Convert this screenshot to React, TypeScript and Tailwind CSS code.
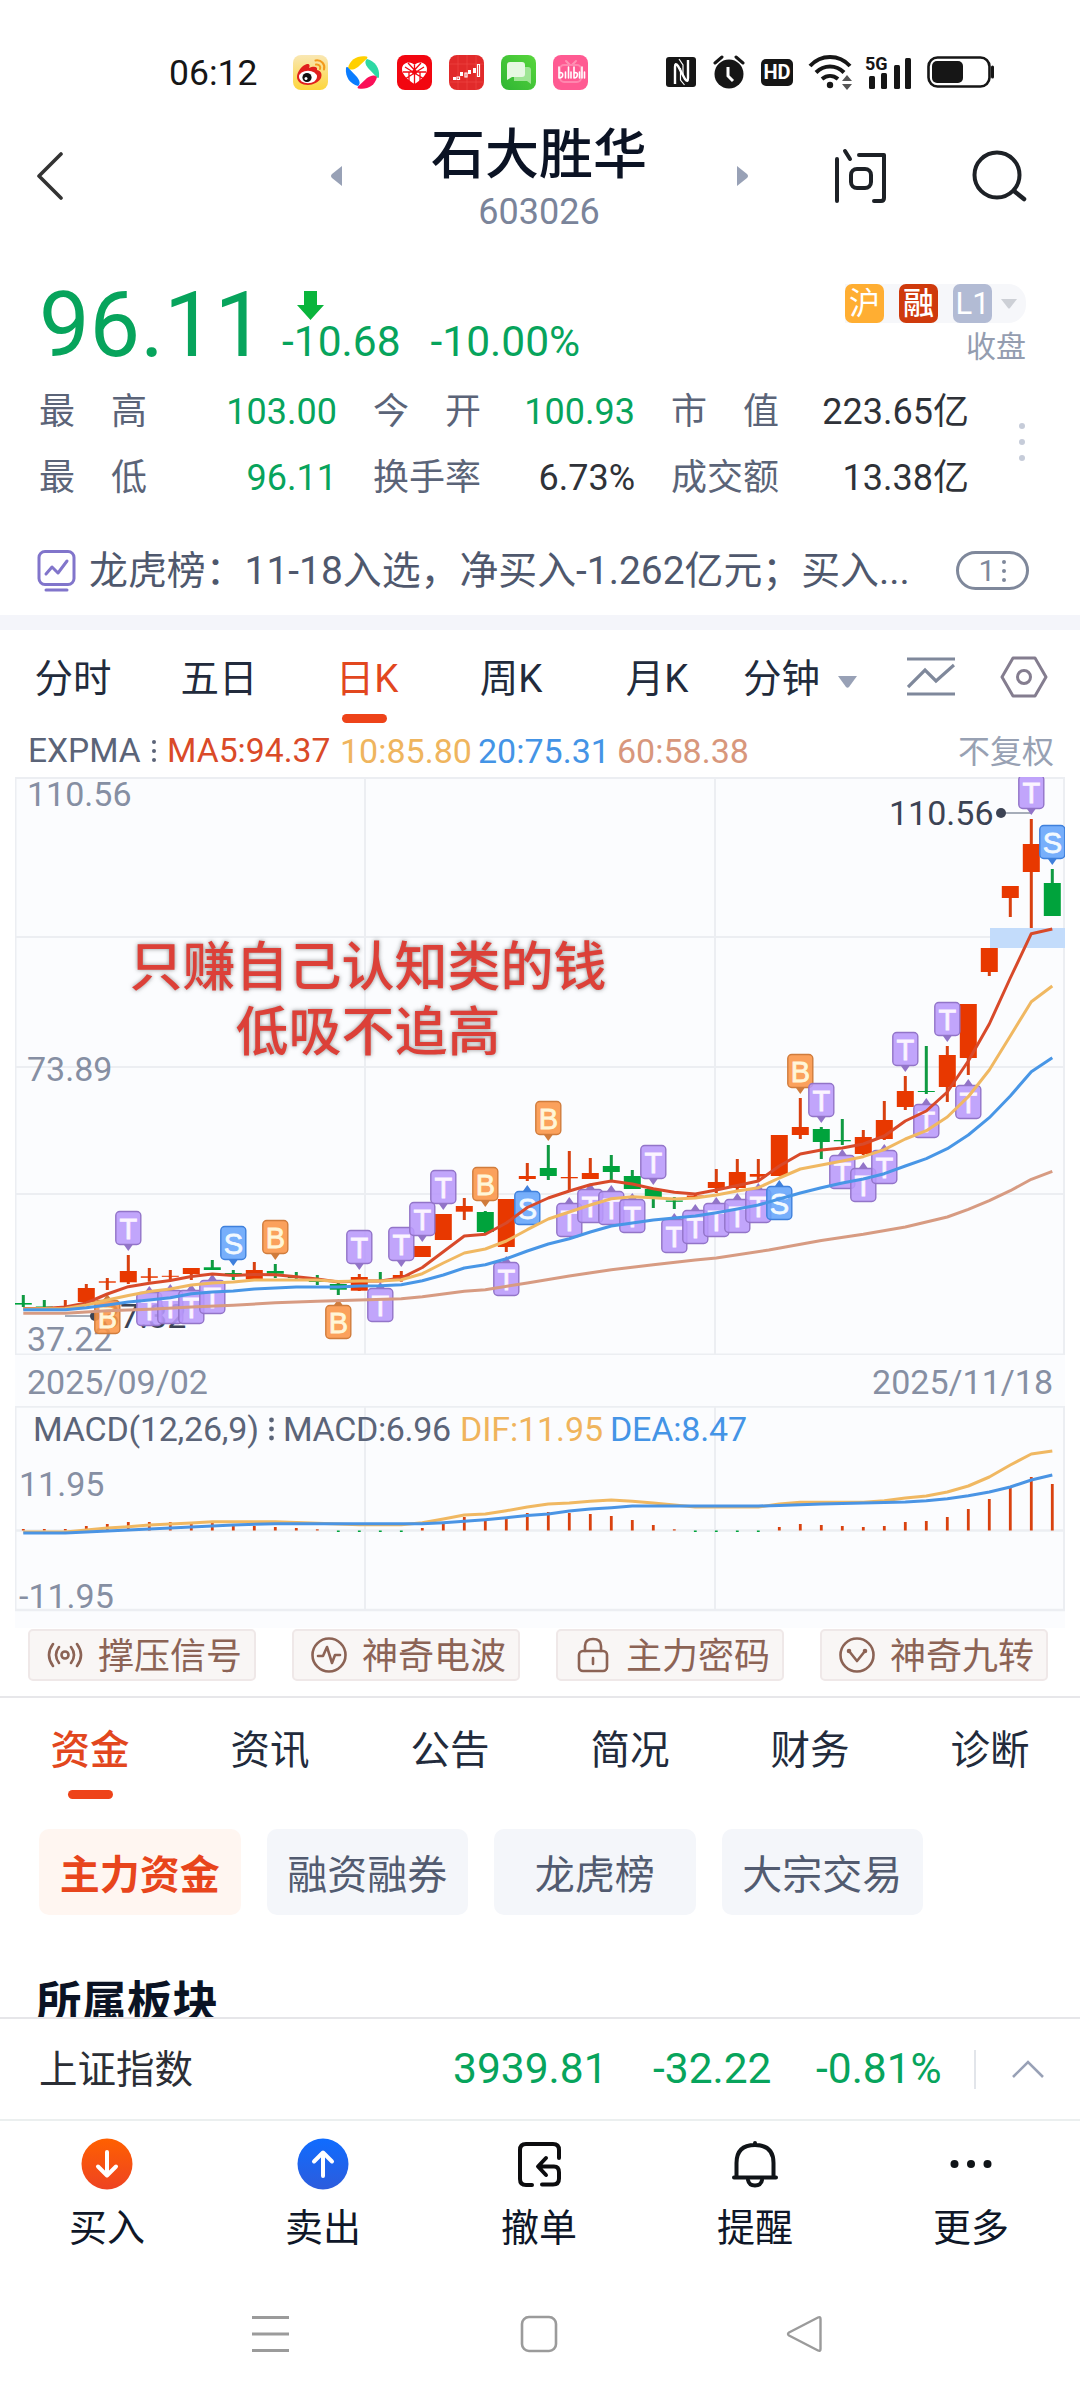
import React from 'react';

const UP = '#e83800';
const DOWN = '#00a33c';

type Candle = [high: number, top: number, bottom: number, low: number, color: string];

const candles: Candle[] = [
  [1295, 1303, 1304.6, 1307, DOWN],
  [1300, 1306.5, 1308, 1308, DOWN],
  [1300, 1306.5, 1308, 1308, UP],
  [1284, 1288, 1302, 1302, UP],
  [1278, 1281.3, 1282.7, 1290, UP],
  [1255, 1271, 1282.3, 1284, UP],
  [1268, 1276.3, 1277.8, 1281.7, UP],
  [1270, 1275.8, 1276.8, 1281, UP],
  [1268, 1268, 1274, 1280, UP],
  [1260, 1267.3, 1270, 1270, DOWN],
  [1270, 1273, 1274.7, 1280, DOWN],
  [1262, 1270, 1279.3, 1281, UP],
  [1264, 1271, 1273.7, 1278, DOWN],
  [1272, 1277, 1278, 1280, DOWN],
  [1275, 1280.7, 1282, 1285, DOWN],
  [1283, 1284, 1289.7, 1295, DOWN],
  [1274, 1277, 1290.7, 1291, UP],
  [1272, 1280, 1281, 1282, DOWN],
  [1271, 1275, 1279, 1281.7, UP],
  [1246, 1246, 1257, 1257, UP],
  [1214, 1214, 1240, 1240, UP],
  [1198, 1206, 1211.7, 1220, UP],
  [1211, 1212, 1232, 1233, DOWN],
  [1199, 1199, 1247, 1252, UP],
  [1163, 1176, 1179, 1181, UP],
  [1145, 1168, 1176, 1180, DOWN],
  [1151, 1177, 1178.3, 1190, UP],
  [1158, 1173, 1179, 1179, UP],
  [1155, 1166, 1172, 1181, DOWN],
  [1170, 1176, 1189, 1189, DOWN],
  [1189, 1189, 1197, 1208, DOWN],
  [1197, 1200.5, 1201.8, 1209, DOWN],
  [1194, 1195.5, 1197, 1199, UP],
  [1169, 1182, 1188, 1193, UP],
  [1159, 1172, 1188, 1190, UP],
  [1159, 1174, 1176.7, 1180, UP],
  [1135, 1135, 1176, 1176, UP],
  [1098, 1127, 1135, 1139, UP],
  [1127, 1129, 1142, 1159, DOWN],
  [1119, 1140, 1141.3, 1145, DOWN],
  [1130, 1137, 1154, 1155, UP],
  [1101, 1120, 1139, 1140, UP],
  [1076, 1091, 1107, 1110, UP],
  [1046, 1091, 1092, 1094, DOWN],
  [1046, 1055, 1087, 1102, UP],
  [1004, 1004, 1058, 1075, UP],
  [948, 948, 972, 976, UP],
  [886, 886, 898, 917, UP],
  [819, 844, 872, 928, UP],
  [869, 883, 916, 916, DOWN],
];

type Point = [index: number, y: number];

const ma5: Point[] = [
  [0, 1308.5], [1, 1308.5], [2, 1307], [3, 1303], [4, 1294], [5, 1286.7], [6, 1283.3], [7, 1280.5], [8, 1276.5], [9, 1274],
  [10, 1275.5], [11, 1274.5], [12, 1274.7], [13, 1276.7], [14, 1279], [15, 1282], [16, 1281], [17, 1281], [18, 1278], [19, 1267.5],
  [20, 1251.7], [21, 1236], [22, 1234.3], [23, 1223], [24, 1207.5], [25, 1198], [26, 1191], [27, 1184.7], [28, 1181], [29, 1184],
  [30, 1188.7], [31, 1192.3], [32, 1194], [33, 1190], [34, 1185.5], [35, 1181], [36, 1166], [37, 1154], [38, 1150], [39, 1148],
  [40, 1144], [41, 1136], [42, 1121], [43, 1111], [44, 1092], [45, 1061], [46, 1024], [47, 978], [48, 933.7], [49, 929],
];

const ma10: Point[] = [
  [0, 1309], [2, 1308.5], [3, 1305], [4, 1300], [5, 1295.5], [6, 1291.5], [7, 1289], [8, 1285], [9, 1283], [10, 1282],
  [11, 1280], [14, 1280], [15, 1281.5], [16, 1281], [17, 1281], [18, 1279.7], [19, 1273.7], [20, 1263], [21, 1253], [22, 1249],
  [23, 1241], [24, 1229.7], [25, 1219], [26, 1212], [27, 1205], [28, 1198.7], [29, 1196.7], [30, 1197.7], [31, 1199], [32, 1198],
  [33, 1195], [34, 1191], [35, 1187.7], [36, 1178], [37, 1169], [38, 1165], [39, 1161], [40, 1156.7], [41, 1149.7], [42, 1139],
  [43, 1130.7], [44, 1117], [45, 1096.7], [46, 1070], [47, 1036], [48, 1001.7], [49, 986],
];

const ma20: Point[] = [
  [0, 1309.7], [2, 1309.7], [3, 1307.7], [4, 1305], [5, 1302], [6, 1300], [7, 1297.7], [8, 1293.7], [9, 1292], [10, 1291],
  [11, 1289], [12, 1288], [13, 1287], [15, 1287], [16, 1286], [17, 1285.7], [18, 1284.7], [19, 1280.7], [20, 1275], [21, 1268],
  [22, 1264.7], [23, 1258.7], [24, 1251], [25, 1244], [26, 1238.7], [27, 1232], [28, 1226], [29, 1223], [30, 1220], [31, 1218],
  [32, 1216], [33, 1212.7], [34, 1209], [35, 1205], [36, 1199], [37, 1193], [38, 1187.7], [39, 1183], [40, 1179], [41, 1173.7],
  [42, 1166], [43, 1158.7], [44, 1148.7], [45, 1135], [46, 1117.7], [47, 1096], [48, 1071.7], [49, 1057.7],
];

const ma60: Point[] = [
  [0, 1313.3], [2, 1313.3], [4, 1310.7], [6, 1309.3], [8, 1307], [10, 1305.3], [12, 1302.7], [14, 1301.3], [16, 1300], [18, 1298.7],
  [19, 1296.7], [21, 1291.3], [22, 1289.7], [24, 1283], [26, 1276], [28, 1269.7], [30, 1264.7], [32, 1260], [33, 1258], [35.5, 1250],
  [38, 1240.5], [40, 1234.3], [42, 1227], [44, 1217], [45, 1209.3], [46, 1200.7], [47, 1190.7], [48, 1179.3], [49, 1171.3],
];

const macd = [
  1529, 1529, 1529, 1526, 1524, 1522, 1522, 1522, 1522, 1523, 1524, 1526, 1527, 1528, 1529.3, 1532, 1532, 1532, 1532, 1528,
  1524, 1517, 1521, 1519, 1513, 1512, 1513, 1514, 1516, 1520, 1525, 1529.3, 1532, 1532, 1532, 1532, 1527, 1524, 1525, 1526,
  1527, 1526, 1522, 1521, 1517, 1509, 1499, 1487, 1477, 1484,
];

const dif: Point[] = [
  [0, 1532], [2, 1532], [3, 1530], [4, 1528], [5, 1526.7], [6, 1525], [8, 1523], [9, 1521.7], [12, 1521.7], [14, 1523.3],
  [16, 1524.7], [18, 1524.7], [19, 1522.7], [20, 1519], [21, 1515], [22, 1514], [23, 1510.7], [24, 1507], [25, 1504], [26, 1503],
  [27, 1501.3], [28, 1500], [29, 1501.3], [30, 1503], [31, 1505], [32, 1507], [35, 1507], [36, 1504], [37, 1502.3], [40, 1502.3],
  [41, 1500.7], [42, 1498], [43, 1496], [44, 1492], [45, 1486], [46, 1477], [47, 1465], [48, 1454], [49, 1451],
];

const dea: Point[] = [
  [0, 1533], [2, 1533], [4, 1531], [6, 1529], [8, 1527], [10, 1525], [12, 1523.7], [19, 1523.7], [20, 1522.7], [21, 1521.3],
  [22, 1519.7], [23, 1517.7], [24, 1515.5], [25, 1514], [26, 1511], [27, 1509], [28, 1507.7], [29, 1506], [35, 1506], [36, 1505.5],
  [38, 1504], [40, 1503], [42, 1502], [43, 1500.7], [44, 1498.7], [45, 1495.7], [46, 1492], [47, 1487], [48, 1480], [49, 1475],
];

type Mark = [index: number, edge: number, letter: 'T' | 'B' | 'S'];

// edge = top of the box for marks above a candle, bottom of the box for marks below it
const marksAbove: Mark[] = [
  [5, 1211, 'T'], [10, 1226, 'S'], [12, 1220, 'B'], [16, 1230, 'T'], [18, 1227, 'T'], [19, 1202, 'T'], [20, 1170, 'T'],
  [22, 1167, 'B'], [25, 1101, 'B'], [30, 1145, 'T'], [37, 1054, 'B'], [38, 1083, 'T'], [42, 1032, 'T'], [44, 1002, 'T'],
  [48, 775, 'T'], [49, 825, 'S'],
];

const marksBelow: Mark[] = [
  [4, 1334, 'B'], [6, 1326, 'T'], [7, 1324, 'T'], [8, 1324, 'T'], [9, 1314, 'T'], [15, 1339, 'B'], [17, 1322, 'T'], [23, 1296, 'T'],
  [24, 1225, 'S'], [26, 1237, 'T'], [27, 1223, 'T'], [28, 1225, 'T'], [29, 1233, 'T'], [31, 1253, 'T'], [32, 1244, 'T'],
  [33, 1237, 'T'], [34, 1233, 'T'], [35, 1223, 'T'], [36, 1220, 'S'], [39, 1189, 'T'], [40, 1202, 'T'], [41, 1184, 'T'],
  [43, 1138, 'T'], [45, 1119, 'T'],
];

const markFill = { T: '#b898fa', B: '#fa9446', S: '#64a4fa' };
const markStroke = { T: '#9274c8', B: '#d07c3c', S: '#3f80dc' };
const markText = { T: '#fbf4ff', B: '#fff6d8', S: '#f2f9ff' };

const px = (i: number) => 23.3 + i * 21;
const toPoints = (pts: Point[]) => pts.map(([i, y]) => `${px(i)},${y}`).join(' ');

const Marker: React.FC<{ mark: Mark; below?: boolean }> = ({ mark: [i, edge, letter], below }) => {
  const x = px(i);
  const top = below ? edge - 34 : edge;
  const tip = below
    ? `M${x - 5} ${top + 1} L${x} ${top - 6} L${x + 5} ${top + 1} Z`
    : `M${x - 5} ${top + 33} L${x} ${top + 40} L${x + 5} ${top + 33} Z`;
  return (
    <g>
      <path d={tip} fill={markStroke[letter]} />
      <rect x={x - 12.5} y={top + 0.5} width="25" height="33" rx="4" fill={markFill[letter]} fillOpacity="0.88" stroke={markStroke[letter]} strokeWidth="1.4" />
      <text
        x={x}
        y={top + 27.5}
        textAnchor="middle"
        fontSize="29"
        fill={markText[letter]}
        stroke={markText[letter]}
        strokeWidth="0.8"
        fontFamily="Liberation Sans, Arial, sans-serif"
      >
        {letter}
      </text>
    </g>
  );
};

const CandleChart = () => (
  <svg className="block" width="1050" height="578" viewBox="15 777 1050 578">
    <g stroke="#eceef2" strokeWidth="2">
      <path d="M15 778H1065M15 937H1065M15 1067H1065M15 1194H1065M15 1354.500H1065" />
      <path d="M365 777V1355M715 777V1355M1064 777V1355M15.500 777V1355" />
    </g>
    <g fontSize="34" fill="#868fa3">
      <text x="27" y="806">110.56</text>
      <text x="27" y="1081">73.89</text>
      <text x="27" y="1350.5">37.22</text>
    </g>
    <rect x="990" y="928" width="75" height="20" fill="#c3dcfb" />

    <path d="M65 1316H93M1001 813H1031" stroke="#8b93a3" strokeWidth="1.6" />
    <g fill="#3c4354" fontSize="34">
      <circle cx="95" cy="1316" r="5" />
      <circle cx="1001" cy="813" r="5" />
      <text x="101" y="1328">37.32</text>
      <text x="889" y="825">110.56</text>
    </g>

    {candles.map(([high, top, bottom, low, color], i) => (
      <g key={i} fill={color}>
        <rect x={px(i) - 1.5} y={high} width="3" height={low - high} fill={color === UP ? '#d84010' : '#109a42'} />
        <rect x={px(i) - 8.5} y={top} width="17" height={bottom - top} />
      </g>
    ))}

    {marksBelow.map((m) => <Marker key={m[0]} mark={m} below />)}
    {marksAbove.map((m) => <Marker key={m[0]} mark={m} />)}

    <g fill="none" strokeWidth="3" strokeLinejoin="round">
      <polyline points={toPoints(ma60)} stroke="#d79b82" />
      <polyline points={toPoints(ma5)} stroke="#d84a2a" />
      <polyline points={toPoints(ma10)} stroke="#f0b862" />
      <polyline points={toPoints(ma20)} stroke="#4896e6" />
    </g>
  </svg>
);

const MacdChart = () => (
  <svg className="block" width="1050" height="222" viewBox="15 1406 1050 222">
    <g stroke="#eceef2" strokeWidth="2">
      <path d="M15 1406.500H1065M15 1530.500H1065M15 1610H1065" strokeWidth="2.500" />
      <path d="M365 1406V1610M715 1406V1610M1064 1406V1610M15.500 1406V1610" />
    </g>
    {macd.map((y, i) => (
      <rect
        key={i}
        x={px(i) - 1.4}
        y={Math.min(y, 1530.5)}
        width="2.8"
        height={Math.max(1.2, Math.abs(1530.5 - y))}
        fill={y > 1530.5 ? DOWN : '#d9420f'}
      />
    ))}
    <g fill="none" strokeWidth="3" strokeLinejoin="round">
      <polyline points={toPoints(dif)} stroke="#f0b862" />
      <polyline points={toPoints(dea)} stroke="#4a94e4" />
    </g>
    <g fontSize="34" fill="#868fa3">
      <text x="19" y="1495.5">11.95</text>
      <text x="19" y="1607.5">-11.95</text>
    </g>
    <g fontSize="34">
      <text x="33" y="1440.5" fill="#5b6478" textLength="226">MACD(12,26,9)</text>
      <text x="283" y="1440.5" fill="#5b6478" textLength="168">MACD:6.96</text>
      <text x="460" y="1440.5" fill="#f0b45c" textLength="143">DIF:11.95</text>
      <text x="610" y="1440.5" fill="#4494e6" textLength="137">DEA:8.47</text>
    </g>
    <g fill="#5b6478">
      <circle cx="271.5" cy="1420" r="2.4" />
      <circle cx="271.5" cy="1429" r="2.4" />
      <circle cx="271.5" cy="1438" r="2.4" />
    </g>
  </svg>
);

const StatusBar = () => (
  <div className="flex h-[110px] items-center pt-[34px] pl-[169px] text-[#161616]">
    <span className="w-[124px] pt-[3px] text-[35.500px] leading-none">06:12</span>
    <div className="flex gap-[17px]">
      {/* weibo */}
      <svg width="35" height="35" viewBox="0 0 35 35">
        <defs>
          <linearGradient id="weibo" x1="0" y1="0" x2="0" y2="1">
            <stop offset="0" stopColor="#f9e7b4" />
            <stop offset="1" stopColor="#fdd63c" />
          </linearGradient>
        </defs>
        <rect width="35" height="35" rx="8" fill="url(#weibo)" />
        <path d="M4 22C4 17 9 10 14 9c3-.5 3 2 2 4 4-2 9-2 8 2 5 1 5 5 4 8-2 4-8 7-13 7-6 0-11-3-11-8Z" fill="#e01f1c" />
        <ellipse cx="15" cy="22" rx="9" ry="6.2" fill="#fff" />
        <circle cx="14" cy="22.5" r="4.6" fill="#111" />
        <circle cx="13" cy="23.5" r="1.5" fill="#fff" />
        <path d="M22.500 5.500c6-1 10 4 8.500 9M23 9.500c3-.5 5 2 4 4.500" fill="none" stroke="#f39a1c" strokeWidth="2" strokeLinecap="round" />
      </svg>
      {/* pinwheel */}
      <svg width="35" height="35" viewBox="0 0 35 35">
        <path d="M3 13C5 4 13 0 21.500 1.500c1 .2 1.200 1 .5 2L13 12C9 15 5 15.500 3 13Z" fill="#ffd000" />
        <path d="M22 4c8 2 13 9 12 18-.2 1-1 1.200-2 .5L23 13c-3-4-3.500-7-1-9Z" fill="#2ed8a4" />
        <path d="M32 22c-2 9-10 13-18.500 11.500-1-.2-1.200-1-.5-2L22 23c4-3 8-3.500 10-1Z" fill="#fa1058" />
        <path d="M13 31C5 29 0 22 1 13c.2-1 1-1.200 2-.5L12 22c3 4 3.500 7 1 9Z" fill="#0a7cff" />
      </svg>
      {/* pinduoduo */}
      <svg width="35" height="35" viewBox="0 0 35 35">
        <rect width="35" height="35" rx="8" fill="#f20610" />
        <path d="M17.500 10C14 5.500 5 7 5 14c0 6 6 11 12.500 15C24 25 30 20 30 14c0-7-9-8.500-12.500-4Z" fill="#fff" />
        <path d="M17.500 10v19M8 12l19 12M27 12L8 24M11 8l6.500 7L24 8M6 17h23M12 26v-9M23 26v-9" stroke="#f20610" strokeWidth="1.3" fill="none" />
        <circle cx="17.500" cy="17" r="2.500" fill="#f20610" />
      </svg>
      {/* broker app */}
      <svg width="35" height="35" viewBox="0 0 35 35">
        <rect width="35" height="35" rx="8" fill="#e12a2a" />
        <path d="M9 0v35M18 0v35M27 0v35M0 9h35M0 27h35" stroke="#f04a48" strokeWidth=".6" />
        <path d="M4 22h3v3H4zM11 17h3v4h-3zM19 15h3v4h-3zM24 13h3v5h-3z" fill="#fff" />
        <path d="M8 22h2.500v2.500H8zM16 18h2v4h-2zM28.500 9.500h2v12h-2z" fill="none" stroke="#fff" strokeWidth="1.200" />
      </svg>
      {/* messages */}
      <svg width="35" height="35" viewBox="0 0 35 35">
        <defs>
          <linearGradient id="msg" x1="1" y1="0" x2="0" y2="1">
            <stop offset="0" stopColor="#58d63c" />
            <stop offset="1" stopColor="#2fb534" />
          </linearGradient>
        </defs>
        <rect width="35" height="35" rx="8" fill="url(#msg)" />
        <path d="M13 12h14c2 0 3 1 3 3v14l-4-3H13Z" fill="#9ee594" />
        <path d="M9 7h12c2 0 3 1 3 3v9c0 2-1 3-3 3H11l-5 3V10c0-2 1-3 3-3Z" fill="#e6f8e2" />
      </svg>
      {/* video app */}
      <svg width="35" height="35" viewBox="0 0 35 35">
        <rect width="35" height="35" rx="8" fill="#ff5a92" />
        <path d="M13 6l4 4M23 6l-4 4" stroke="#ff92b4" strokeWidth="2" strokeLinecap="round" />
        <rect x="7" y="10" width="21" height="17" rx="4" fill="none" stroke="#ff86ae" strokeWidth="2" />
        <path d="M6 12v11M6 18c5-2 5 5 0 5M12.500 17v6M15.500 12v11M18 17v6M21 12v11M21 18c5-2 4 5 0 5M26.500 17v6M29 12v11M31.500 17v6" stroke="#fff" strokeWidth="1.600" fill="none" strokeLinecap="round" />
      </svg>
    </div>
    <div className="ml-[78px] flex items-center">
      <svg width="30" height="30" viewBox="0 0 30 30">
        <rect width="30" height="30" rx="3" fill="#161616" />
        <path d="M9 27V10q0-5 3-1l7 13q3 4 3-1V3" fill="none" stroke="#fff" strokeWidth="2.400" />
        <path d="M14.500 11v12l4 5M17 19V8l-4-6" fill="none" stroke="#fff" strokeWidth="1.200" />
      </svg>
      <svg className="ml-[17px]" width="32" height="34" viewBox="0 0 32 34">
        <circle cx="16" cy="19" r="14.500" fill="#161616" />
        <path d="M2 8l7-6M30 8l-7-6" stroke="#161616" strokeWidth="3" strokeLinecap="round" />
        <path d="M15 12v9l5 5" fill="none" stroke="#fff" strokeWidth="3" />
      </svg>
      <span className="ml-[16px] flex h-[27px] w-[32px] items-center justify-center rounded-[5px] bg-[#161616] text-[20px] font-bold leading-none text-white">HD</span>
      <svg className="ml-[15px]" width="44" height="36" viewBox="0 0 44 36">
        <g fill="none" stroke="#161616" strokeWidth="4">
          <path d="M2 12c11-12 29-12 40 0" />
          <path d="M8 18.500c8-8 20-8 28 0" />
          <path d="M14 25c5-4 11-4 16 0" />
        </g>
        <circle cx="22" cy="31" r="3.200" fill="#161616" />
        <path d="M34 27l5-6 5 6ZM34 30h10l-5 6Z" fill="#555" />
      </svg>
      <svg className="ml-[13px]" width="48" height="42" viewBox="0 -6 48 42">
        <text x="0" y="13" fontSize="18" fontWeight="700" fill="#161616">5G</text>
        <g fill="#161616">
          <rect x="4" y="19" width="6" height="13" rx="1.500" />
          <rect x="16" y="16" width="6" height="16" rx="1.500" />
          <rect x="29" y="8" width="6" height="24" rx="1.500" />
          <rect x="40" y="1" width="6" height="31" rx="1.500" />
        </g>
      </svg>
      <svg className="ml-[14px]" width="68" height="32" viewBox="0 0 68 32">
        <rect x="1.500" y="1.500" width="61" height="29" rx="9" fill="none" stroke="#161616" strokeWidth="2.600" />
        <rect x="5" y="5" width="31" height="22" rx="5" fill="#161616" />
        <path d="M65.500 11v10" stroke="#161616" strokeWidth="3" strokeLinecap="round" />
      </svg>
    </div>
  </div>
);

const Header = () => (
  <div className="flex h-[132px] items-center pl-[36px]">
    <svg width="28" height="48" viewBox="0 0 28 48">
      <path d="M25 2L3 24l22 22" fill="none" stroke="#333" strokeWidth="3.600" strokeLinecap="round" strokeLinejoin="round" />
    </svg>
    <svg className="ml-[267px]" width="12" height="20" viewBox="0 0 12 20">
      <path d="M11 0v20L1 12q-2-2 0-4Z" fill="#98a1b6" />
    </svg>
    <div className="ml-[76px] flex w-[240px] flex-col items-center pt-[5px]">
      <h1 className="text-[54px] font-medium leading-[60px] text-[#0b1324]">石大胜华</h1>
      <span className="mt-[6px] text-[36px] leading-[40px] text-[#7a849a]">603026</span>
    </div>
    <svg className="ml-[77px]" width="12" height="20" viewBox="0 0 12 20">
      <path d="M1 0v20l10-8q2-2 0-4Z" fill="#98a1b6" />
    </svg>
    <svg className="ml-[86px]" width="54" height="56" viewBox="0 0 54 56">
      <g fill="none" stroke="#1d2126" strokeWidth="4" strokeLinecap="round" strokeLinejoin="round">
        <path d="M3 11v42M11 3l5 8M25 7h25v43q0 3-3 3h-7" />
        <rect x="17" y="21" width="20" height="19" rx="6" />
      </g>
    </svg>
    <svg className="ml-[84px]" width="56" height="52" viewBox="0 0 56 52">
      <circle cx="25" cy="25" r="22.500" fill="none" stroke="#1d2126" strokeWidth="4" />
      <path d="M42 41l10 8" stroke="#1d2126" strokeWidth="4.500" strokeLinecap="round" />
    </svg>
  </div>
);

const stats = [
  [
    { label: '最高', value: '103.00', green: true },
    { label: '今开', value: '100.93', green: true },
    { label: '市值', value: '223.65亿' },
  ],
  [
    { label: '最低', value: '96.11', green: true },
    { label: '换手率', value: '6.73%' },
    { label: '成交额', value: '13.38亿' },
  ],
];

const Quote = () => (
  <div className="pt-[37px]">
    <div className="flex h-[90px] pl-[39px] pr-[54px] text-[#07a45c]">
      <span className="pt-[2px] text-[90px] leading-[90px]">96.11</span>
      <div className="ml-[17px] pt-[11px]">
        <svg className="ml-[15px] block" width="27" height="30" viewBox="0 0 27 30">
          <path d="M7 1h13v14h7L13.500 30 0 15h7Z" fill="#0ab53c" />
        </svg>
        <div className="flex gap-[30px] pt-[1px] text-[42.500px] leading-[42px]">
          <span>-10.68</span>
          <span>-10.00%</span>
        </div>
      </div>
      <div className="ml-auto flex flex-col items-end pt-[5px]">
        <div className="flex h-[39px] items-center gap-[15px] rounded-r-[18px] bg-[#f6f7fa] text-[31px] leading-none text-white">
          <span className="flex h-[39px] w-[39px] items-center justify-center rounded-[7px] bg-[#ffae32]">沪</span>
          <span className="flex h-[39px] w-[39px] items-center justify-center rounded-[7px] bg-[#cf3a0c] font-medium">融</span>
          <div className="flex items-center">
            <span className="flex h-[39px] w-[39px] items-center justify-center rounded-[7px] bg-[#b2bbd4] text-[31px]">L1</span>
            <svg className="mx-[9px]" width="16" height="10" viewBox="0 0 16 10">
              <path d="M0 0h16L9 9q-1 1-2 0Z" fill="#cdd0d6" />
            </svg>
          </div>
        </div>
        <span className="mt-[8px] text-[30px] leading-[32px] text-[#949db0]">收盘</span>
      </div>
    </div>

    <div className="mt-[10px] flex h-[131px] items-center pl-[39px]">
      <div>
        {stats.map((row, r) => (
          <div key={r} className="flex h-[66px] items-center gap-[36px] text-[36px] leading-none">
            {row.map((s, c) => (
              <div key={s.label} className={c === 1 ? 'flex w-[262px] justify-between' : 'flex w-[298px] justify-between'}>
                <span className="flex w-[108px] justify-between text-[#5b6478]">
                  {s.label.split('').map((ch) => <span key={ch}>{ch}</span>)}
                </span>
                <span className={s.green ? 'text-[#07a45c]' : 'text-[#2f3238]'}>{s.value}</span>
              </div>
            ))}
          </div>
        ))}
      </div>
      <div className="mb-[5px] ml-[50px] flex flex-col gap-[10px]">
        <i className="h-[6px] w-[6px] rounded-full bg-[#c6ccd9]" />
        <i className="h-[6px] w-[6px] rounded-full bg-[#c6ccd9]" />
        <i className="h-[6px] w-[6px] rounded-full bg-[#c6ccd9]" />
      </div>
    </div>

    <div className="flex h-[105px] items-center pt-[16px] pl-[37px] pr-[51px] text-[#4f586d]">
      <svg width="39" height="42" viewBox="0 0 39 42">
        <g fill="none" stroke="#8175cb" strokeWidth="3" strokeLinecap="round" strokeLinejoin="round">
          <rect x="2" y="1.500" width="35" height="33" rx="6" />
          <path d="M9 24l6-7 6 6 9-12" />
          <path d="M9 40h21" />
        </g>
      </svg>
      <span className="ml-[13px] pt-[2px] text-[38.900px] leading-none whitespace-nowrap">龙虎榜：11-18入选，净买入-1.262亿元；买入...</span>
      <span className="ml-auto flex h-[39px] w-[73px] shrink-0 items-center justify-center gap-[7px] rounded-full border-[3px] border-[#7f889b] text-[30px] leading-none text-[#7f889b]">
        1
        <span className="flex flex-col gap-[5px]">
          <i className="h-[4px] w-[4px] rounded-full bg-[#7f889b]" />
          <i className="h-[4px] w-[4px] rounded-full bg-[#7f889b]" />
          <i className="h-[4px] w-[4px] rounded-full bg-[#7f889b]" />
        </span>
      </span>
    </div>
  </div>
);

const PeriodTabs = () => (
  <div className="flex h-[96px] text-[38.500px] leading-[40px] text-[#222b3c]">
    {['分时', '五日', '日K', '周K', '月K'].map((t) => (
      <div key={t} className="flex w-[146px] flex-col items-center pt-[29px]">
        <span className={t === '日K' ? 'ml-[4px] text-[#e2471e]' : ''}>{t}</span>
        {t === '日K' && <i className="mt-[15px] mr-[2px] h-[9px] w-[45px] rounded-full bg-[#ee4319]" />}
      </div>
    ))}
    <div className="flex h-[96px] items-center pl-[13px]">
      <span className="pt-[2px]">分钟</span>
      <svg className="mt-[8px] ml-[18px]" width="19" height="12" viewBox="0 0 19 12">
        <path d="M0 0h19l-8 11q-1.500 1.500-3 0Z" fill="#98a1b6" />
      </svg>
      <svg className="mb-[3px] ml-[50px]" width="48" height="40" viewBox="0 0 48 40">
        <g fill="none" stroke="#7f889b" strokeWidth="3.200">
          <path d="M0 2h48M0 37h48" />
          <path d="M1 30l17-17 11 11L47 8" />
        </g>
      </svg>
      <svg className="mb-[3px] ml-[45px]" width="48" height="42" viewBox="0 0 48 42">
        <g fill="none" stroke="#847d8f" strokeWidth="3">
          <path d="M13 2h22l11 19-11 19H13L2 21Z" strokeLinejoin="round" />
          <circle cx="24" cy="21" r="6.500" />
        </g>
      </svg>
    </div>
  </div>
);

const signals = [
  {
    name: '撑压信号',
    icon: (
      <>
        <circle cx="18" cy="18" r="3.500" />
        <path d="M12 10q-6 8 0 16M24 10q6 8 0 16M6 7q-8 11 0 22M30 7q8 11 0 22" />
      </>
    ),
  },
  {
    name: '神奇电波',
    icon: (
      <>
        <circle cx="18" cy="18" r="16.500" />
        <path d="M7 19h5l4-9 5 16 3-8h5" />
      </>
    ),
  },
  {
    name: '主力密码',
    icon: (
      <>
        <rect x="4" y="14" width="28" height="20" rx="4" />
        <path d="M10 14V9q0-7 8-7t8 7v5M18 21v6" />
      </>
    ),
  },
  {
    name: '神奇九转',
    icon: (
      <>
        <circle cx="18" cy="18" r="16.500" />
        <path d="M10 14l8 10 8-10" />
        <circle cx="10" cy="14" r="1" />
        <circle cx="26" cy="14" r="1" />
      </>
    ),
  },
];

const SignalButtons = () => (
  <div className="flex h-[70px] gap-[36px] border-b-2 border-[#e7e7ea] pt-[1px] pl-[28px]">
    {signals.map((s) => (
      <div key={s.name} className="flex h-[52px] w-[228px] items-center rounded-[5px] border-2 border-[#efe8e8] bg-[#f9f6f5] pl-[17px] text-[36px] leading-none text-[#8c6355]">
        <svg width="36" height="36" viewBox="0 0 36 36" fill="none" stroke="#8c6355" strokeWidth="2.600" strokeLinecap="round" strokeLinejoin="round">
          {s.icon}
        </svg>
        <span className="ml-[15px] pt-[3px] whitespace-nowrap">{s.name}</span>
      </div>
    ))}
  </div>
);

const Funds = () => (
  <div className="h-[319px] overflow-hidden">
    <div className="flex h-[131px] pt-[33px] text-[39.500px] leading-[40px] text-[#222b3c]">
      {['资金', '资讯', '公告', '简况', '财务', '诊断'].map((t, i) => (
        <div key={t} className="flex w-[180px] flex-col items-center">
          <span className={i === 0 ? 'font-medium text-[#e2471e]' : ''}>{t}</span>
          {i === 0 && <i className="mt-[19px] h-[9px] w-[45px] rounded-full bg-[#ee4319]" />}
        </div>
      ))}
    </div>
    <div className="flex gap-[26px] pl-[39px] text-[40px] leading-none text-[#525b70]">
      {['主力资金', '融资融券', '龙虎榜', '大宗交易'].map((t, i) => (
        <div
          key={t}
          className={
            i === 0
              ? 'flex h-[86px] w-[201.500px] items-center justify-center rounded-[10px] bg-[#fff6f1] pt-[7px] font-bold text-[#e8451c]'
              : 'flex h-[86px] w-[201.500px] items-center justify-center rounded-[10px] bg-[#f4f6fa] pt-[7px]'
          }
        >
          {t}
        </div>
      ))}
    </div>
    <h2 className="mt-[65px] pl-[36px] text-[45.500px] font-bold leading-[48px] text-[#0b1324]">所属板块</h2>
  </div>
);

const IndexBar = () => (
  <div className="flex h-[104px] items-center border-t-2 border-b-2 border-t-[#e6e6e9] border-b-[#ebefef] bg-white pl-[39px] text-[42.500px] leading-none text-[#07a45c]">
    <span className="w-[414px] pt-[2px] text-[38.500px] text-[#2b2e35]">上证指数</span>
    <span className="w-[200px]">3939.81</span>
    <span className="w-[163px]">-32.22</span>
    <span className="w-[158px]">-0.81%</span>
    <i className="h-[39px] w-[2px] bg-[#e2e5ea]" />
    <svg className="ml-[35px]" width="34" height="20" viewBox="0 0 34 20">
      <path d="M2 18L17 3l15 15" fill="none" stroke="#98a1b6" strokeWidth="2.600" />
    </svg>
  </div>
);

const actions = [
  {
    name: '买入',
    icon: (
      <>
        <defs>
          <linearGradient id="buy" x1="0" y1="0" x2="0" y2="1">
            <stop offset="0" stopColor="#ff6000" />
            <stop offset="1" stopColor="#ee4322" />
          </linearGradient>
        </defs>
        <circle cx="26" cy="26" r="25.500" fill="url(#buy)" />
        <path d="M26 14v23M17 28.500l9 9 9-9" stroke="#fff" strokeWidth="4" />
      </>
    ),
  },
  {
    name: '卖出',
    icon: (
      <>
        <defs>
          <linearGradient id="sell" x1="0" y1="0" x2="0" y2="1">
            <stop offset="0" stopColor="#0f6cff" />
            <stop offset="1" stopColor="#2d5cdc" />
          </linearGradient>
        </defs>
        <circle cx="26" cy="26" r="25.500" fill="url(#sell)" />
        <path d="M26 38V15M17 23.500l9-9 9 9" stroke="#fff" strokeWidth="4" />
      </>
    ),
  },
  {
    name: '撤单',
    icon: (
      <g stroke="#0c0c0e" strokeWidth="4">
        <path d="M46 20V12q0-6-6-6H13q-6 0-6 6v29q0 6 6 6h6" />
        <path d="M33 20l-8 8.500 8 8.500M26 28.500h15q5 0 5 6v6q0 6-6 6H29" />
      </g>
    ),
  },
  {
    name: '提醒',
    icon: (
      <g stroke="#101418" strokeWidth="4">
        <path d="M26 5v2M7.500 39V25q0-18 18.500-18t18.500 18v14M5 39.500h42" />
        <path d="M19 42q1 5.500 7 5.500t7-5.500" />
      </g>
    ),
  },
  {
    name: '更多',
    icon: (
      <g fill="#101418">
        <circle cx="9.500" cy="26" r="4" />
        <circle cx="26" cy="26" r="4" />
        <circle cx="42.500" cy="26" r="4" />
      </g>
    ),
  },
];

const ActionBar = () => (
  <div className="-ml-[1px] flex h-[145px] pt-[17px] text-[38px] leading-[40px] text-[#0f1728]">
    {actions.map((a) => (
      <div key={a.name} className="flex w-[216px] shrink-0 flex-col items-center">
        <svg width="52" height="52" viewBox="0 0 52 52" fill="none" strokeLinecap="round" strokeLinejoin="round">
          {a.icon}
        </svg>
        <span className="mt-[18px]">{a.name}</span>
      </div>
    ))}
  </div>
);

const SystemNav = () => (
  <div className="flex h-[136px] items-center pl-[252px]">
    <svg width="38" height="38" viewBox="0 0 38 38">
      <path d="M0 2.500h37M0 19h37M0 35.500h37" stroke="#9b9b9b" strokeWidth="3" />
    </svg>
    <svg className="ml-[230px]" width="38" height="38" viewBox="0 0 38 38">
      <rect x="2" y="2" width="34" height="34" rx="7" fill="none" stroke="#9b9b9b" strokeWidth="2.600" />
    </svg>
    <svg className="ml-[228px]" width="38" height="38" viewBox="0 0 38 38">
      <path d="M3 17.500L32 2.500q2.500-1 2.500 1.500v30q0 2.500-2.500 1.500L3 20.500q-2-1.500 0-3Z" fill="none" stroke="#9b9b9b" strokeWidth="2.400" strokeLinejoin="round" />
    </svg>
  </div>
);

export default function App() {
  return (
    <div className="h-[2400px] w-[1080px] overflow-hidden bg-white font-[Roboto,'Noto_Sans_CJK_SC',sans-serif]">
      <StatusBar />
      <Header />
      <Quote />
      <div className="h-[15px] bg-[#f4f5fa]" />
      <PeriodTabs />

      <div className="flex h-[51px] items-center pr-[26px] pb-[2px] pl-[28px] text-[34px] leading-none whitespace-nowrap">
        <span className="w-[124px] text-[#5b6478]"><span className="text-[33.500px]">EXPMA</span></span>
        <span className="flex w-[15px] flex-col gap-[5px]">
          <i className="h-[4px] w-[4px] rounded-full bg-[#5b6478]" />
          <i className="h-[4px] w-[4px] rounded-full bg-[#5b6478]" />
          <i className="h-[4px] w-[4px] rounded-full bg-[#5b6478]" />
        </span>
        <span className="w-[173px] text-[33.700px] text-[#da4a28]">MA5:94.37</span>
        <span className="w-[138px] text-[#efb55e]">10:85.80</span>
        <span className="w-[139px] text-[#4494e6]">20:75.31</span>
        <span className="text-[#d8977c]">60:58.38</span>
        <span className="ml-auto pt-[3px] text-[32px] text-[#98a1b3]">不复权</span>
      </div>

      <div className="ml-[15px] w-[1050px] bg-[#fbfcfe]">
        <div className="relative">
          <CandleChart />
          <p className="absolute top-[159px] left-[103px] w-[500px] text-center text-[53px] font-medium leading-[65px] text-[#dc4038] [text-shadow:0_0_4px_rgba(70,70,70,0.6)]">
            只赚自己认知类的钱
            <br />
            低吸不追高
          </p>
        </div>
        <div className="flex h-[51px] items-center justify-between px-[12px] pt-[2px] text-[34px] leading-none text-[#868fa3]">
          <span>2025/09/02</span>
          <span>2025/11/18</span>
        </div>
        <MacdChart />
      </div>

      <SignalButtons />
      <Funds />
      <IndexBar />
      <ActionBar />
      <SystemNav />
    </div>
  );
}
